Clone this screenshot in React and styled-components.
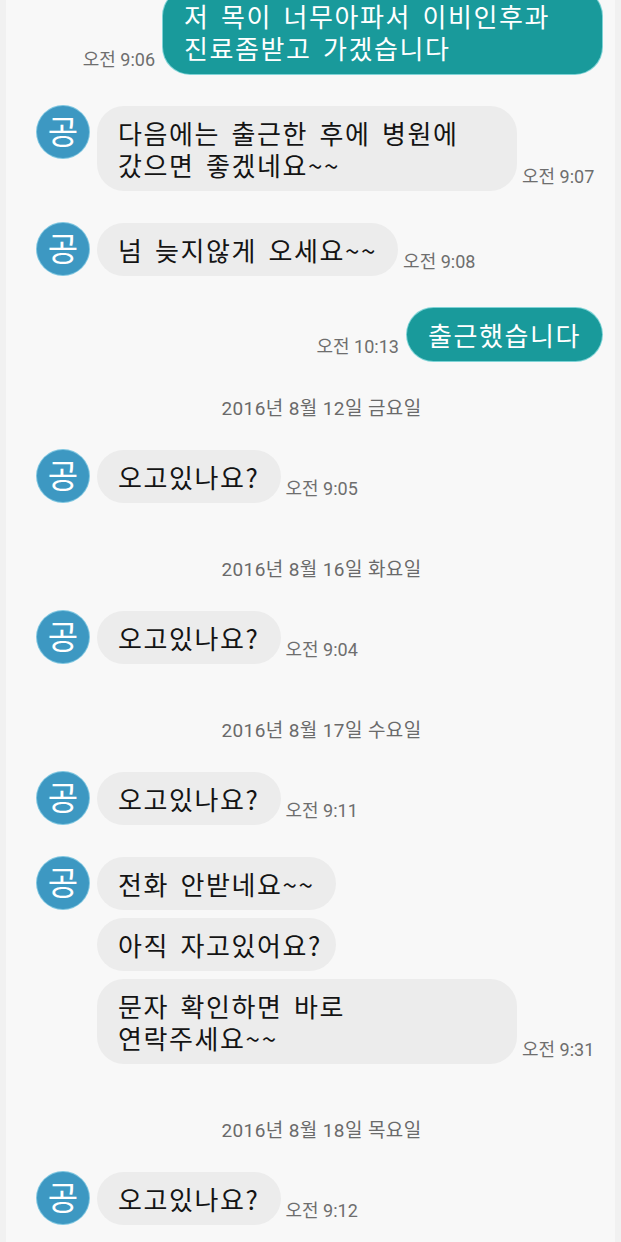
import React from 'react';
import styled, { createGlobalStyle } from 'styled-components';

const GlobalStyle = createGlobalStyle`
  html, body {
    margin: 0;
    padding: 0;
    background: #f8f8f8;
  }
  body {
    width: 621px;
    height: 1242px;
    overflow: hidden;
    font-family: "Noto Sans CJK KR", "Noto Sans", sans-serif;
  }
`;

const Screen = styled.div`
  width: 621px;
  height: 1242px;
  overflow: hidden;
  background: #f8f8f8;
  border-left: 6px solid #f1f1f1;
  border-right: 6px solid #f1f1f1;
  box-sizing: border-box;
`;

const List = styled.div`
  display: flex;
  flex-direction: column;
  margin-top: -11px;
  padding: 0 13px 0 31px;
`;

const Row = styled.div`
  display: flex;
  align-items: flex-end;
  justify-content: ${(p) => (p.$mine ? 'flex-end' : 'flex-start')};
  gap: 8px;
  margin-top: 32px;
  &:first-child {
    margin-top: 0;
  }
`;

const Group = styled.div`
  display: flex;
  align-items: flex-start;
  gap: 8px;
  margin-top: 32px;
`;

const Avatar = styled.div`
  flex: none;
  align-self: flex-start;
  width: 52px;
  height: 52px;
  border-radius: 50%;
  background: #3d98c2;
  box-shadow: 0 0 0 1px #7fc6e0;
  color: #fff;
  display: flex;
  align-items: center;
  justify-content: center;
  font-size: 33px;
  line-height: 1;
  padding-bottom: 3px;
  box-sizing: border-box;
`;

const Bubbles = styled.div`
  display: flex;
  flex-direction: column;
  align-items: flex-start;
  gap: 8px;
`;

const Line = styled.div`
  display: flex;
  align-items: flex-end;
  gap: 5px;
`;

const Bubble = styled.div`
  box-sizing: border-box;
  width: ${(p) => (p.$width ? `${p.$width}px` : 'auto')};
  padding: 11px 21px 10px;
  border-radius: 27px;
  font-size: 26px;
  line-height: 32px;
  letter-spacing: 1.6px;
  word-spacing: 4px;
  white-space: nowrap;
  background: ${(p) => (p.$mine ? '#199a9b' : '#ececec')};
  color: ${(p) => (p.$mine ? '#ffffff' : '#141414')};
  box-shadow: ${(p) => (p.$mine ? '0 0 0 1px #7fd3d6' : 'none')};
`;

const Time = styled.span`
  flex: none;
  font-family: Roboto, "Noto Sans CJK KR", sans-serif;
  font-size: 18px;
  line-height: 22px;
  color: #6e6e6e;
  letter-spacing: 0;
  margin-bottom: 3px;
`;

const DateLine = styled.div`
  text-align: center;
  font-family: Roboto, "Noto Sans CJK KR", sans-serif;
  font-size: 19px;
  line-height: 24px;
  letter-spacing: 0.4px;
  color: #6a6a6a;
  margin-top: ${(p) => (p.$tight ? '36px' : '55px')};
  padding-left: 4px;

  & + ${Row}, & + ${Group} {
    margin-top: 29px;
  }
`;

function Received({ text, time, width }) {
  return (
    <Row>
      <Avatar>공</Avatar>
      <Line>
        <Bubble $width={width}>{text}</Bubble>
        <Time>{time}</Time>
      </Line>
    </Row>
  );
}

function Sent({ text, time, width }) {
  return (
    <Row $mine>
      <Time>{time}</Time>
      <Bubble $mine $width={width}>{text}</Bubble>
    </Row>
  );
}

export default function App() {
  return (
    <>
      <GlobalStyle />
      <Screen>
        <List>
          <Sent
            width={439}
            time="오전 9:06"
            text={<>저 목이 너무아파서 이비인후과<br />진료좀받고 가겠습니다</>}
          />
          <Received
            width={420}
            time="오전 9:07"
            text={<>다음에는 출근한 후에 병원에<br />갔으면 좋겠네요~~</>}
          />
          <Received time="오전 9:08" text="넘 늦지않게 오세요~~" />
          <Sent time="오전 10:13" text="출근했습니다" />

          <DateLine $tight>2016년 8월 12일 금요일</DateLine>
          <Received time="오전 9:05" text="오고있나요?" />

          <DateLine>2016년 8월 16일 화요일</DateLine>
          <Received time="오전 9:04" text="오고있나요?" />

          <DateLine>2016년 8월 17일 수요일</DateLine>
          <Received time="오전 9:11" text="오고있나요?" />

          <Group>
            <Avatar>공</Avatar>
            <Bubbles>
              <Bubble $width={239}>전화 안받네요~~</Bubble>
              <Bubble $width={239}>아직 자고있어요?</Bubble>
              <Line>
                <Bubble $width={420}>문자 확인하면 바로<br />연락주세요~~</Bubble>
                <Time>오전 9:31</Time>
              </Line>
            </Bubbles>
          </Group>

          <DateLine>2016년 8월 18일 목요일</DateLine>
          <Received time="오전 9:12" text="오고있나요?" />
        </List>
      </Screen>
    </>
  );
}
